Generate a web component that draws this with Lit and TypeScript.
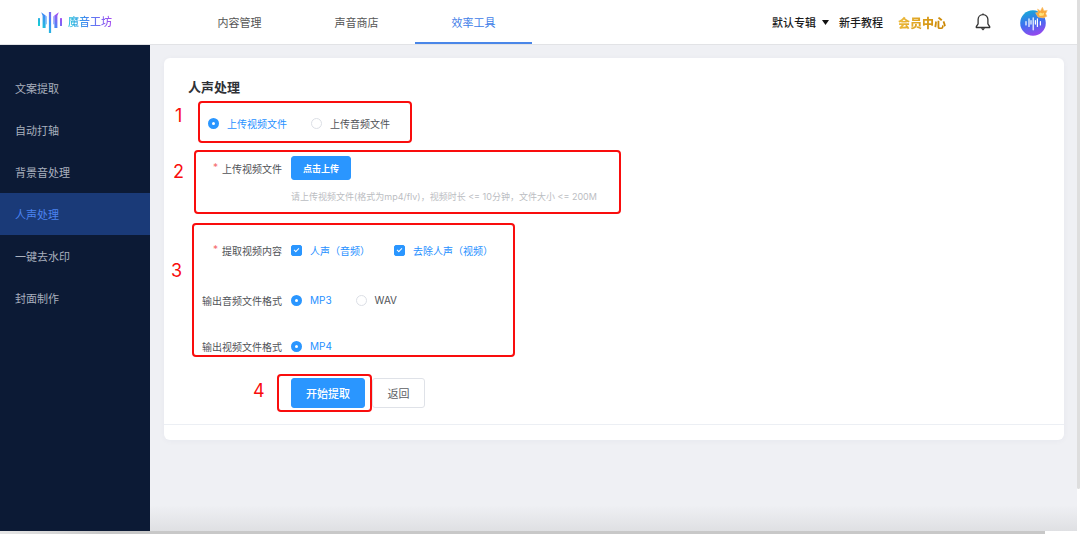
import { LitElement, html, css } from "lit";
import { customElement, state } from "lit/decorators.js";

@customElement("app-logo")
class AppLogo extends LitElement {
  static styles = css`
    :host { display: block; }
    .logo { display: flex; align-items: center; gap: 5px; text-decoration: none; }
    .mark { width: 25px; height: 23px; display: block; }
    .name {
      font-size: 11px;
      line-height: 16px;
      font-weight: 500;
      background: linear-gradient(90deg, #22c3d8, #4a86f2 45%, #a64cf0);
      -webkit-background-clip: text;
      background-clip: text;
      color: transparent;
    }
  `;
  render() {
    return html`<a class="logo" href="#">
      <svg class="mark" viewBox="0 0 25 23" aria-hidden="true">
        <defs>
          <linearGradient id="g" gradientUnits="userSpaceOnUse" x1="3" y1="19" x2="21" y2="4">
            <stop offset="0" stop-color="#12d5d0" />
            <stop offset=".5" stop-color="#3f8df5" />
            <stop offset="1" stop-color="#a54df2" />
          </linearGradient>
        </defs>
        <g fill="url(#g)">
          <rect x="0" y="7" width="2" height="8" rx=".6" />
          <path d="M3.200 1.200L7.600 4.600V17H4.600V4.800z" />
          <path d="M7.600 4.600l1.400 1V13l-1.400.8z" opacity=".55" />
          <rect x="10.900" y="1" width="2.200" height="21" />
          <path d="M20.800 1.200l-4.400 3.400V17h3V4.800z" />
          <path d="M16.400 4.600l-1.400 1V13l1.400.8z" opacity=".55" />
          <rect x="22" y="7" width="2" height="8" rx=".6" />
        </g>
      </svg>
      <span class="name">魔音工坊</span>
    </a>`;
  }
}

@customElement("top-bar")
class TopBar extends LitElement {
  static styles = css`
    :host { display: block; background: #fff; border-bottom: 1px solid #e2e3e6; }
    .bar { display: flex; height: 44px; padding: 0 29px 0 38px; }
    .brand { width: 143px; display: flex; align-items: center; }
    .nav { display: flex; flex: 1; }
    .tab {
      width: 117px;
      box-sizing: border-box;
      display: flex;
      align-items: center;
      justify-content: center;
      border-bottom: 2px solid transparent;
      border-top: 1px solid transparent;
      color: #555;
      font-size: 11px;
      text-decoration: none;
    }
    .tab.on { color: #3f80e8; border-bottom-color: #4a86e8; }
    .tools { display: flex; align-items: center; font-size: 11px; font-weight: 500; }
    .plain {
      display: flex;
      align-items: center;
      gap: 6px;
      padding: 0;
      border: 0;
      background: none;
      font: inherit;
      color: #1c1c1c;
      text-decoration: none;
      white-space: nowrap;
    }
    .caret { width: 7px; height: 5px; display: block; }
    .guide { margin-left: 10px; }
    .vip {
      margin-left: 15px;
      font-size: 12px;
      font-weight: 900;
      text-decoration: none;
      background: linear-gradient(100deg, #eebb3c, #c98400);
      -webkit-background-clip: text;
      background-clip: text;
      color: transparent;
    }
    .bell { margin-left: 29px; }
    .bell svg { width: 16px; height: 18px; display: block; }
    .user { margin-left: 29px; }
    .user svg { width: 28px; height: 32px; display: block; }
  `;
  render() {
    return html`<header class="bar">
      <app-logo class="brand"></app-logo>
      <nav class="nav">
        ${["内容管理", "声音商店", "效率工具"].map(
          (t) => html`<a class="tab ${t === "效率工具" ? "on" : ""}" href="#">${t}</a>`
        )}
      </nav>
      <div class="tools">
        <button class="plain" type="button">
          默认专辑
          <svg class="caret" viewBox="0 0 7 5"><path d="M0 0h7L3.5 5z" fill="#111" /></svg>
        </button>
        <a class="plain guide" href="#">新手教程</a>
        <a class="vip" href="#">会员中心</a>
        <button class="plain bell" type="button" aria-label="通知">
          <svg viewBox="0 0 16 18" fill="none" stroke="#333" stroke-width="1.3" stroke-linejoin="round">
            <path d="M8 1.600C5 1.600 3.100 3.900 3.100 6.600v4.200L1.300 13.600v.9h13.400v-.9l-1.800-2.800V6.600C12.900 3.900 11 1.600 8 1.600z" />
            <path d="M5.800 15.200h4.400L8 17.400z" fill="#333" stroke="none" />
            <path d="M8 .4v1.200" />
          </svg>
        </button>
        <button class="plain user" type="button" aria-label="账户">
          <svg viewBox="0 0 28 32">
            <defs>
              <linearGradient id="a" x1=".3" y1="0" x2=".6" y2="1">
                <stop offset="0" stop-color="#17a9d6" />
                <stop offset=".5" stop-color="#3f6ff0" />
                <stop offset="1" stop-color="#9a45ee" />
              </linearGradient>
            </defs>
            <circle cx="13" cy="17" r="12.800" fill="url(#a)" />
            <g stroke="#fff" stroke-width="1.200" stroke-linecap="round" fill="none">
              <path d="M6 15.500v3.400M9 12.800v7.600M11 14.500v3.600M13.200 11.800v12M15.400 14.500v3.600M17.400 12.800v7.600M20.400 15.500v3.400" />
            </g>
            <path d="M15.600 6.800l2.600-.2-.6-3.600 2.800 1.900L22.400 1.200l1.500 3.600 3.300-.4-1.500 3.300 1.300 2.500-3.700 1.700-5.300-.9z" fill="#f9a93c" stroke="#fbc476" stroke-width=".6" />
            <path d="M18.600 8l2-1.600 1.700 1.100 1.900-.9-.6 3-3.800.5z" fill="#ffe27a" />
          </svg>
        </button>
      </div>
    </header>`;
  }
}

@customElement("side-menu")
class SideMenu extends LitElement {
  static styles = css`
    :host { display: block; background: #0c1a35; }
    .menu { padding-top: 22px; display: flex; flex-direction: column; }
    .item {
      height: 42px;
      padding-left: 15px;
      display: flex;
      align-items: center;
      color: #a9b0be;
      font-size: 11px;
      text-decoration: none;
    }
    .item.on { background: #1a3a78; color: #4b83f0; }
  `;
  render() {
    return html`<nav class="menu">
      ${["文案提取", "自动打轴", "背景音处理", "人声处理", "一键去水印", "封面制作"].map(
        (t) => html`<a class="item ${t === "人声处理" ? "on" : ""}" href="#">${t}</a>`
      )}
    </nav>`;
  }
}

@customElement("voice-form")
class VoiceForm extends LitElement {
  static styles = css`
    :host {
      display: block;
      position: relative;
      background: #fff;
      border-radius: 6px;
      box-shadow: 0 1px 6px rgba(30, 50, 90, 0.04);
      font-family: Inter, "Noto Sans CJK SC", sans-serif;
      font-size: 10px;
      color: #505257;
    }
    .body { padding: 18px 24px 16px; border-bottom: 1px solid #eceff4; }
    .foot { height: 15px; }
    .title { margin: 0 0 13px; font-size: 13px; line-height: 22px; font-weight: 700; color: #2f3136; }
    .row { display: flex; align-items: center; height: 24px; gap: 9px; }
    .row.source { padding-left: 20px; margin-bottom: 21px; }
    .label { width: 94px; text-align: right; white-space: nowrap; display: flex; justify-content: flex-end; gap: 4px; }
    .req { color: #f56c6c; }
    .choices { display: flex; align-items: center; }
    .choice { display: flex; align-items: center; gap: 8px; white-space: nowrap; }
    .choice.on { color: #1f90ff; }
    .choices.radios { gap: 24px; }
    .checks { gap: 24px; }
    input {
      appearance: none;
      box-sizing: border-box;
      width: 11px;
      height: 11px;
      margin: 0;
      flex: none;
      border: 1px solid #dcdfe6;
      background: #fff;
    }
    input[type="radio"] { border-radius: 50%; }
    input[type="radio"]:checked { border: 4px solid #2a96ff; }
    input[type="checkbox"] { border-radius: 2px; display: grid; place-items: center; }
    input[type="checkbox"]:checked { background: #2a96ff; border-color: #2a96ff; }
    input[type="checkbox"]:checked::after {
      content: "";
      width: 2px;
      height: 4px;
      margin-bottom: 1px;
      border: solid #fff;
      border-width: 0 1px 1px 0;
      transform: rotate(45deg);
    }
    .btn {
      font-family: inherit;
      border: 1px solid #2a96ff;
      border-radius: 3px;
      background: #2a96ff;
      color: #fff;
      font-weight: 500;
      white-space: nowrap;
      padding: 0;
    }
    .small { height: 24px; width: 60px; font-size: 9px; font-weight: 700; }
    .big { height: 30px; font-size: 11px; }
    .main { width: 74px; }
    .back { width: 53px; background: #fff; border-color: #dfe2e8; color: #5c5e63; font-weight: 400; }
    .hint { margin: 10px 0 34px 103px; font-size: 9px; line-height: 14px; color: #bbbdc2; }
    .content { margin-bottom: 26px; }
    .audio { margin-bottom: 22px; }
    .video { margin-bottom: 20px; }
    .actions { display: flex; gap: 7px; margin-left: 103px; }
    .mark { position: absolute; box-sizing: border-box; border: 2px solid #f90d0d; border-radius: 4px; pointer-events: none; }
    .num { position: absolute; font: 18px/20px Inter, "Liberation Sans", sans-serif; color: #f90d0d; }
    .m1 { left: 34px; top: 43px; width: 214px; height: 42px; }
    .m2 { left: 30px; top: 92px; width: 427px; height: 64px; }
    .m3 { left: 28px; top: 165px; width: 323px; height: 134px; }
    .m4 { left: 113px; top: 316px; width: 95px; height: 38px; }
    .n1 { left: 11px; top: 48px; }
    .n2 { left: 9px; top: 104px; }
    .n3 { left: 7px; top: 203px; }
    .n4 { left: 89px; top: 323px; }
  `;

  @state() source = "上传视频文件";
  @state() audio = "MP3";
  @state() parts = ["人声（音频）", "去除人声（视频）"];

  radio(name: string, text: string, current: string, pick: (v: string) => void) {
    return html`<label class="choice ${text === current ? "on" : ""}">
      <input type="radio" name=${name} .checked=${text === current} @change=${() => pick(text)} />${text}
    </label>`;
  }

  toggle(text: string) {
    this.parts = this.parts.includes(text) ? this.parts.filter((p) => p !== text) : [...this.parts, text];
  }

  render() {
    return html`
      <form class="body" @submit=${(e: Event) => e.preventDefault()}>
        <h1 class="title">人声处理</h1>
        <div class="row source choices radios" role="radiogroup" aria-label="文件类型">
          ${["上传视频文件", "上传音频文件"].map((t) => this.radio("source", t, this.source, (v) => (this.source = v)))}
        </div>
        <div class="row">
          <label class="label" for="upload"><span class="req">*</span>上传视频文件</label>
          <button class="btn small" id="upload" type="button">点击上传</button>
        </div>
        <p class="hint">请上传视频文件(格式为mp4/flv)，视频时长 &lt;= 10分钟，文件大小 &lt;= 200M</p>
        <div class="row content" role="group" aria-labelledby="l-content">
          <span class="label" id="l-content"><span class="req">*</span>提取视频内容</span>
          <div class="choices checks">
            ${["人声（音频）", "去除人声（视频）"].map(
              (t) => html`<label class="choice ${this.parts.includes(t) ? "on" : ""}">
                <input type="checkbox" .checked=${this.parts.includes(t)} @change=${() => this.toggle(t)} />${t}
              </label>`
            )}
          </div>
        </div>
        <div class="row audio" role="radiogroup" aria-labelledby="l-audio">
          <span class="label" id="l-audio">输出音频文件格式</span>
          <div class="choices radios">
            ${["MP3", "WAV"].map((t) => this.radio("audio", t, this.audio, (v) => (this.audio = v)))}
          </div>
        </div>
        <div class="row video" role="radiogroup" aria-labelledby="l-video">
          <span class="label" id="l-video">输出视频文件格式</span>
          <div class="choices">${this.radio("video", "MP4", "MP4", () => {})}</div>
        </div>
        <div class="actions">
          <button class="btn big main" type="submit">开始提取</button>
          <button class="btn big back" type="button">返回</button>
        </div>
      </form>
      <div class="foot"></div>
      ${[1, 2, 3, 4].map((n) => html`<div class="mark m${n}"></div><span class="num n${n}">${n}</span>`)}
    `;
  }
}

@customElement("app-root")
class AppRoot extends LitElement {
  static styles = css`
    :host {
      display: grid;
      grid-template: minmax(0, 1fr) 3px / minmax(0, 1fr) 3px;
      height: 100vh;
      background: #fff;
      font-family: "Liberation Sans", "Noto Sans CJK SC", sans-serif;
    }
    .page { display: flex; flex-direction: column; }
    .split { display: flex; flex: 1; min-height: 0; }
    .side { width: 150px; flex: none; }
    .main {
      flex: 1;
      padding: 13px 13px 0 14px;
      background: linear-gradient(to top, #dfe0e3, #eff0f4 26px);
    }
    .vbar { height: 92%; background: #dedede; border-radius: 0 0 2px 2px; }
    .hbar { width: 97%; background: linear-gradient(90deg, #e6e6e6, #c8c8c8 10%); }
  `;
  render() {
    return html`
      <div class="page">
        <top-bar></top-bar>
        <div class="split">
          <side-menu class="side"></side-menu>
          <main class="main"><voice-form></voice-form></main>
        </div>
      </div>
      <div class="vbar"></div>
      <div class="hbar"></div>
    `;
  }
}
